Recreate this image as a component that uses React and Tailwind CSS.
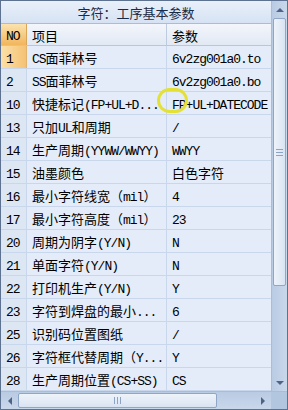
import React from 'react';

const rows = [
  ['1', 'CS面菲林号', '6v2zg001a0.to'],
  ['2', 'SS面菲林号', '6v2zg001a0.bo'],
  ['10', '快捷标记(FP+UL+D...', 'FP+UL+DATECODE'],
  ['13', '只加UL和周期', '/'],
  ['14', '生产周期(YYWW/WWYY)', 'WWYY'],
  ['15', '油墨颜色', '白色字符'],
  ['16', '最小字符线宽（mil）', '4'],
  ['17', '最小字符高度（mil）', '23'],
  ['20', '周期为阴字(Y/N)', 'N'],
  ['21', '单面字符(Y/N)', 'N'],
  ['22', '打印机生产(Y/N)', 'Y'],
  ['23', '字符到焊盘的最小...', '6'],
  ['25', '识别码位置图纸', '/'],
  ['26', '字符框代替周期（Y...', 'Y'],
  ['28', '生产周期位置(CS+SS)', 'CS'],
];

// split CJK and latin runs so each gets its own font and size
function Txt({ s }) {
  const parts = s.split(/([\u3000-\u303f\u4e00-\u9fff\uff00-\uffef]+)/);
  return (
    <span className="whitespace-nowrap">
      {parts.map((p, i) =>
        p ? (
          <span
            key={i}
            className={
              i % 2
                ? "font-['Noto_Sans_CJK_SC',sans-serif] text-[13px]"
                : "font-['Liberation_Mono',monospace] text-[13px] tracking-[-1px]"
            }
          >
            {p}
          </span>
        ) : null
      )}
    </span>
  );
}

function Arrow({ dir }) {
  const pts = {
    up: '1,6 5,2 9,6',
    down: '1,2 5,6 9,2',
    left: '6,1 2,5 6,9',
    right: '2,1 6,5 2,9',
  }[dir];
  const vertical = dir === 'up' || dir === 'down';
  return (
    <svg width={vertical ? 10 : 8} height={vertical ? 8 : 10} viewBox={vertical ? '0 0 10 8' : '0 0 8 10'}>
      <polygon points={pts} fill="#4e6487" />
    </svg>
  );
}

function Grip({ vertical }) {
  return vertical ? (
    <div className="flex flex-col gap-[2px]">
      <div className="w-[7px] h-px bg-[#8da3c3]" />
      <div className="w-[7px] h-px bg-[#8da3c3]" />
      <div className="w-[7px] h-px bg-[#8da3c3]" />
    </div>
  ) : (
    <div className="flex gap-[2px]">
      <div className="h-[7px] w-px bg-[#8da3c3]" />
      <div className="h-[7px] w-px bg-[#8da3c3]" />
      <div className="h-[7px] w-px bg-[#8da3c3]" />
    </div>
  );
}

export default function App() {
  return (
    <div className="w-[288px] h-[410px] border border-[#5d7191] bg-[#e3ecf8] flex flex-col overflow-hidden text-black">
      <div className="flex h-[390px]">
        <div className="relative w-[270px] flex flex-col">
          <div className="h-[23px] border-b border-[#aabdd6] bg-gradient-to-b from-[#e9f0fa] to-[#d6e2f3] flex items-center justify-center text-[#1b2b44] leading-none">
            <Txt s="字符：工序基本参数" />
          </div>
          <div className="h-[22px] grid grid-cols-[26px_140px_1fr] border-b border-[#b7c8dd] bg-gradient-to-b from-[#f3f6fb] to-[#e1e9f4] leading-none">
            <div className="border-r border-[#d9a55a] bg-gradient-to-b from-[#fae3ae] to-[#f2b55a] flex items-center pl-[5px]">
              <Txt s="NO" />
            </div>
            <div className="border-r border-[#bccbdf] flex items-center pl-[5px]">
              <Txt s="项目" />
            </div>
            <div className="flex items-center pl-[5px]">
              <Txt s="参数" />
            </div>
          </div>
          {rows.map(([no, name, val], i) => (
            <div key={no} className="h-[23px] grid grid-cols-[26px_140px_1fr] border-b border-[#c8d7eb] leading-none">
              <div
                className={
                  i === 0
                    ? 'border-r border-[#e2b36a] bg-gradient-to-r from-[#fbe0a8] to-[#f5c274] flex items-center pl-[5px]'
                    : 'border-r border-[#c8d7eb] bg-[#dde7f4] flex items-center pl-[5px]'
                }
              >
                <Txt s={no} />
              </div>
              <div className="border-r border-[#c8d7eb] flex items-center pl-[5px] overflow-hidden">
                <Txt s={name} />
              </div>
              <div className="flex items-center pl-[5px] overflow-hidden">
                <Txt s={val} />
              </div>
            </div>
          ))}
          <div className="absolute left-[156px] top-[87px] w-[31px] h-[25px] rounded-full border-[3px] border-[#e4e135]" />
        </div>
        <div className="w-[16px] border-l border-[#aabdd6] bg-gradient-to-r from-[#b9cbe3] to-[#c9d7ea] flex flex-col">
          <div className="h-[17px] flex items-center justify-center">
            <Arrow dir="up" />
          </div>
          <div className="h-[268px] mx-px rounded-[2px] border border-[#8fa6c7] bg-gradient-to-r from-[#eef3fa] to-[#d9e4f2] flex items-center justify-center">
            <Grip vertical />
          </div>
          <div className="flex-1" />
          <div className="h-[17px] flex items-center justify-center">
            <Arrow dir="down" />
          </div>
        </div>
      </div>
      <div className="flex flex-1 border-t border-[#aabdd6]">
        <div className="w-[270px] bg-gradient-to-b from-[#b9cbe3] to-[#c9d7ea] flex">
          <div className="w-[17px] flex items-center justify-center">
            <Arrow dir="left" />
          </div>
          <div className="w-[199px] my-px rounded-[2px] border border-[#8fa6c7] bg-gradient-to-b from-[#eef3fa] to-[#d9e4f2] flex items-center justify-center">
            <Grip />
          </div>
          <div className="flex-1" />
          <div className="w-[17px] flex items-center justify-center">
            <Arrow dir="right" />
          </div>
        </div>
        <div className="flex-1 bg-[#b3c6e0]" />
      </div>
    </div>
  );
}
